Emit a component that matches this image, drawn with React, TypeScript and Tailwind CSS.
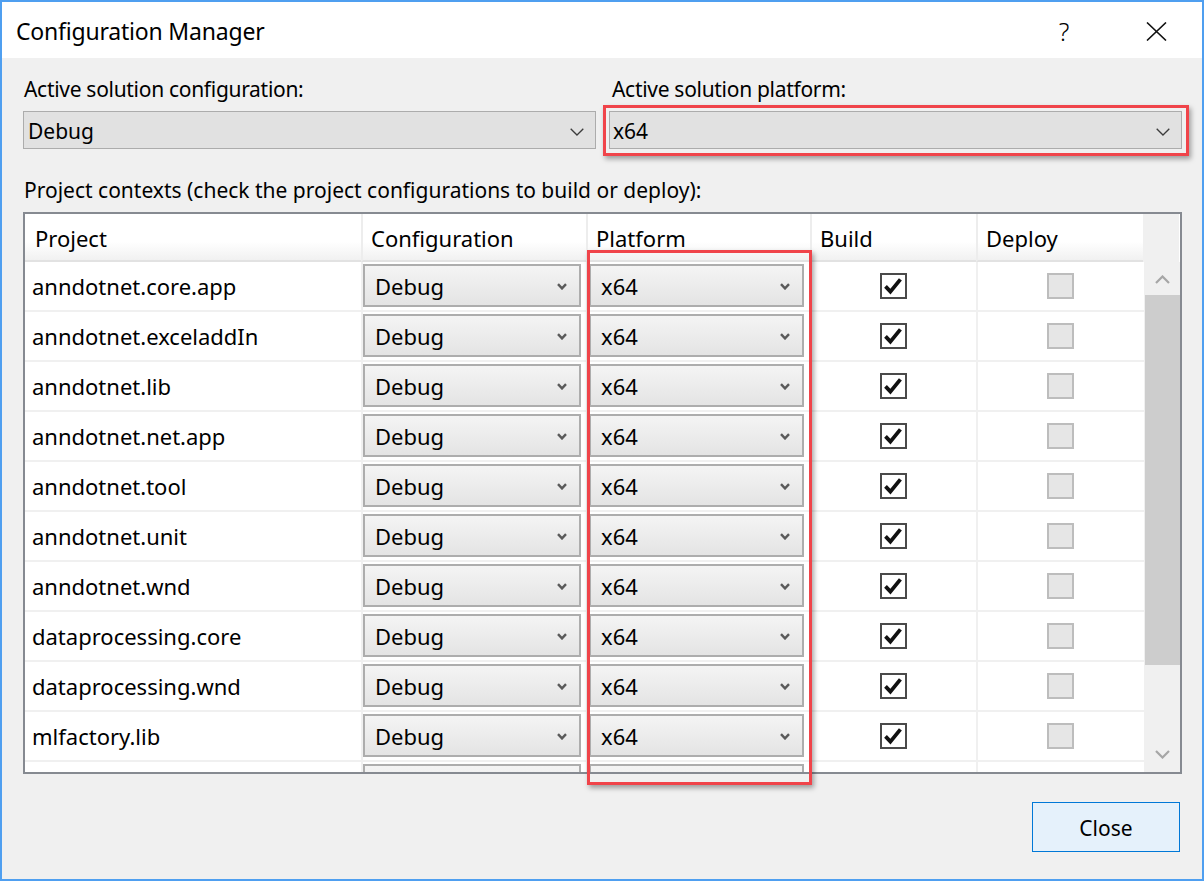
import React from "react";

const projects = [
  "anndotnet.core.app",
  "anndotnet.exceladdIn",
  "anndotnet.lib",
  "anndotnet.net.app",
  "anndotnet.tool",
  "anndotnet.unit",
  "anndotnet.wnd",
  "dataprocessing.core",
  "dataprocessing.wnd",
  "mlfactory.lib",
  "",
];

const font = "font-['Noto_Sans','Open_Sans',sans-serif]";

function SmallChevron() {
  return (
    <svg width="10" height="7" viewBox="0 0 10 7" className="shrink-0">
      <path d="M1 1.2 L5 5.4 L9 1.2" fill="none" stroke="#5a5a5a" strokeWidth="2.4" />
    </svg>
  );
}

function ThinChevron() {
  return (
    <svg width="14" height="8" viewBox="0 0 14 8" className="shrink-0">
      <path d="M0.7 0.7 L7 7 L13.3 0.7" fill="none" stroke="#3c3c3c" strokeWidth="1.3" />
    </svg>
  );
}

function ScrollArrow({ up }: { up?: boolean }) {
  return (
    <svg width="15" height="9" viewBox="0 0 15 9">
      <path
        d={up ? "M1 8 L7.5 1.5 L14 8" : "M1 1 L7.5 7.5 L14 1"}
        fill="none"
        stroke="#a6a6a6"
        strokeWidth="2.2"
      />
    </svg>
  );
}

function CellSelect({ value }: { value: string }) {
  return (
    <div className="flex h-[43px] items-center justify-between border-2 border-[#adadad] bg-gradient-to-b from-[#f4f4f4] to-[#e4e4e4] pl-[10px] pr-[12px] pt-[2px]">
      <span>{value}</span>
      <SmallChevron />
    </div>
  );
}

function CheckBox({ checked }: { checked: boolean }) {
  if (!checked) {
    return <div className="h-[26px] w-[27px] border-2 border-[#bdbdbd] bg-[#e6e6e6]" />;
  }
  return (
    <div className="flex h-[26px] w-[27px] items-center justify-center border-2 border-[#4a4a4a] bg-white">
      <svg width="20" height="18" viewBox="0 0 20 18">
        <path d="M2.5 9.4 L7.4 14.6 L17.4 2.4" fill="none" stroke="#111" strokeWidth="3.8" />
      </svg>
    </div>
  );
}

const headers = ["Project", "Configuration", "Platform", "Build", "Deploy"];

export default function App() {
  return (
    <div
      className={`relative flex h-[881px] w-[1204px] flex-col border-2 border-[#4f9ff0] text-black ${font}`}
    >
      {/* Title bar */}
      <div className="flex h-[56px] shrink-0 items-center bg-white pl-[14px] pr-[23px] pt-[2px]">
        <span className="text-[23px] leading-none tracking-[-0.2px]">Configuration Manager</span>
        <div className="ml-auto flex items-center">
          <div className="flex w-[46px] justify-center text-[25px] font-light leading-none">?</div>
          <div className="ml-[46px] flex w-[46px] justify-center">
            <svg width="21" height="19" viewBox="0 0 21 19">
              <path d="M1 0.5 L20 18.5 M20 0.5 L1 18.5" stroke="#111" strokeWidth="1.6" />
            </svg>
          </div>
        </div>
      </div>

      {/* Body */}
      <div className="flex flex-1 flex-col bg-[#f0f0f0] pl-[21px] pr-[20px] pt-[17px]">
        <div className="grid grid-cols-[573px_573px] gap-x-[13px]">
          <div className="flex flex-col">
            <span className="pl-[1px] text-[21px] leading-[28px] tracking-[-0.3px]">
              Active solution configuration:
            </span>
            <div className="mt-[8px] flex h-[38px] items-center justify-between border border-[#acacac] bg-[#e1e1e1] pl-[4px] pr-[11px] pt-[3px] text-[21px]">
              <span>Debug</span>
              <ThinChevron />
            </div>
          </div>
          <div className="flex flex-col">
            <span className="pl-[3px] text-[21px] leading-[28px] tracking-[-0.3px]">
              Active solution platform:
            </span>
            <div className="mt-[8px] flex h-[38px] items-center justify-between border border-[#acacac] bg-[#e1e1e1] pl-[3px] pr-[11px] pt-[3px] text-[21px]">
              <span>x64</span>
              <ThinChevron />
            </div>
          </div>
        </div>

        <span className="mt-[27px] pl-[1px] text-[21px] leading-[28px]">
          Project contexts (check the project configurations to build or deploy):
        </span>

        {/* Data grid */}
        <div className="mt-[8px] flex h-[562px] flex-col overflow-hidden border-2 border-[#868a91] bg-white">
          <div className="grid h-[48px] shrink-0 grid-cols-[336px_225px_224px_166px_167px_36px]">
            {headers.map((h, i) => (
              <div
                key={h}
                className={`flex items-center border-b-2 border-[#e2e2e2] bg-gradient-to-b from-white from-60% to-[#f1f1f1] pt-[3px] text-[22px] ${
                  i === 0 ? "pl-[10px]" : "border-l-2 border-l-[#ededed] pl-[8px]"
                }`}
              >
                {h}
              </div>
            ))}
            <div className="bg-[#f0f0f0]" />
          </div>

          <div className="flex min-h-0 flex-1">
            <div className="flex-1 overflow-hidden">
              {projects.map((p, i) => {
                const last = p === "";
                return (
                  <div
                    key={i}
                    className="grid h-[50px] grid-cols-[336px_225px_224px_166px_167px] border-b-2 border-[#f0f0f0] text-[22px]"
                  >
                    <div className="flex items-center pl-[7px]">{p}</div>
                    <div className="border-l-2 border-[#f0f0f0] pr-[5px] pt-[2px]">
                      <CellSelect value={last ? "" : "Debug"} />
                    </div>
                    <div className="border-l-2 border-[#f0f0f0] pl-[1px] pr-[6px] pt-[2px]">
                      <CellSelect value={last ? "" : "x64"} />
                    </div>
                    <div className="flex items-center justify-center border-l-2 border-[#f0f0f0] pr-[2px]">
                      <CheckBox checked />
                    </div>
                    <div className="flex items-center justify-center border-l-2 border-[#f0f0f0]">
                      <CheckBox checked={false} />
                    </div>
                  </div>
                );
              })}
            </div>

            {/* Scrollbar */}
            <div className="flex w-[36px] shrink-0 flex-col bg-[#f0f0f0]">
              <div className="flex h-[33px] items-center justify-center pt-[2px]">
                <ScrollArrow up />
              </div>
              <div className="flex flex-1 flex-col pl-[1px]">
                <div className="h-[370px] bg-[#cdcdcd]" />
              </div>
              <div className="flex h-[33px] items-center justify-center pb-[2px]">
                <ScrollArrow />
              </div>
            </div>
          </div>
        </div>

        <button className="mr-[2px] mt-[28px] h-[50px] w-[148px] self-end border border-[#0078d7] bg-[#e5f1fb] pt-[3px] text-[21px]">
          Close
        </button>
      </div>

      {/* Red annotation boxes */}
      <div className="pointer-events-none absolute left-[601px] top-[103px] h-[51px] w-[586px] border-[3px] border-[#f0444a] shadow-[2px_3px_5px_rgba(0,0,0,0.35)]" />
      <div className="pointer-events-none absolute left-[585px] top-[248px] h-[535px] w-[225px] border-[3px] border-[#f0444a] shadow-[2px_3px_5px_rgba(0,0,0,0.35)]" />
    </div>
  );
}
